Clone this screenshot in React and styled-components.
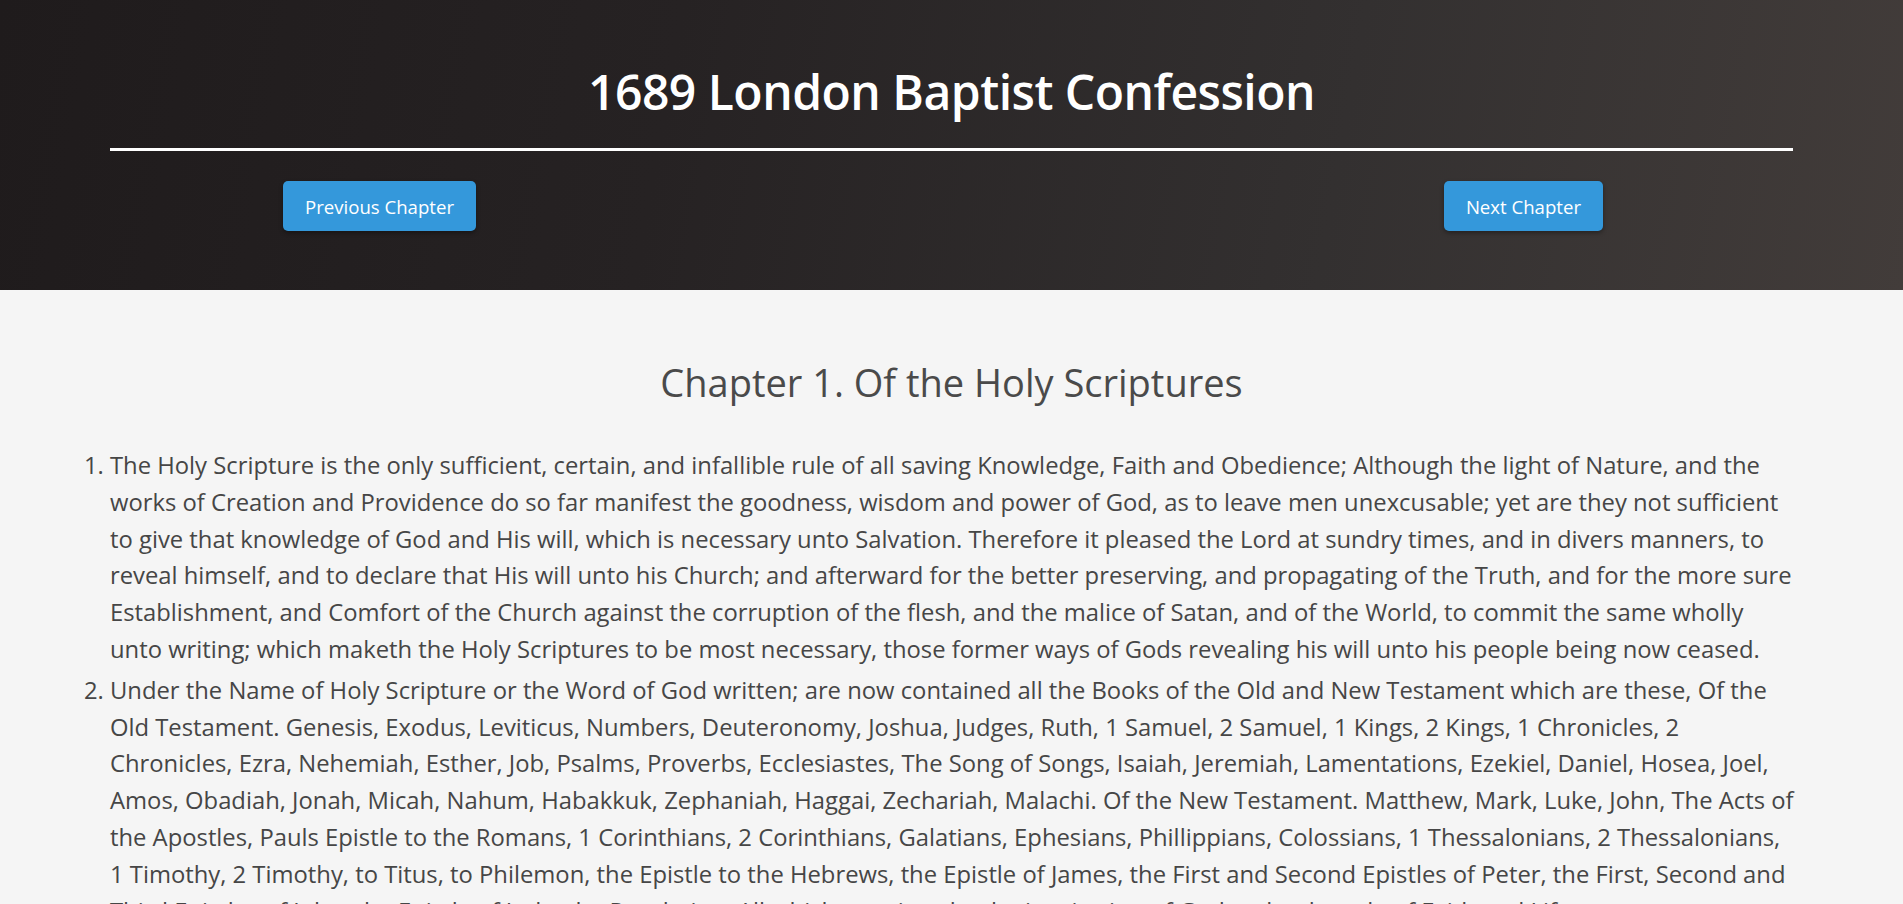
import React from 'react';
import styled, { createGlobalStyle } from 'styled-components';

const paragraphs = [
  'The Holy Scripture is the only sufficient, certain, and infallible rule of all saving Knowledge, Faith and Obedience; Although the light of Nature, and the works of Creation and Providence do so far manifest the goodness, wisdom and power of God, as to leave men unexcusable; yet are they not sufficient to give that knowledge of God and His will, which is necessary unto Salvation. Therefore it pleased the Lord at sundry times, and in divers manners, to reveal himself, and to declare that His will unto his Church; and afterward for the better preserving, and propagating of the Truth, and for the more sure Establishment, and Comfort of the Church against the corruption of the flesh, and the malice of Satan, and of the World, to commit the same wholly unto writing; which maketh the Holy Scriptures to be most necessary, those former ways of Gods revealing his will unto his people being now ceased.',
  'Under the Name of Holy Scripture or the Word of God written; are now contained all the Books of the Old and New Testament which are these, Of the Old Testament. Genesis, Exodus, Leviticus, Numbers, Deuteronomy, Joshua, Judges, Ruth, 1 Samuel, 2 Samuel, 1 Kings, 2 Kings, 1 Chronicles, 2 Chronicles, Ezra, Nehemiah, Esther, Job, Psalms, Proverbs, Ecclesiastes, The Song of Songs, Isaiah, Jeremiah, Lamentations, Ezekiel, Daniel, Hosea, Joel, Amos, Obadiah, Jonah, Micah, Nahum, Habakkuk, Zephaniah, Haggai, Zechariah, Malachi. Of the New Testament. Matthew, Mark, Luke, John, The Acts of the Apostles, Pauls Epistle to the Romans, 1 Corinthians, 2 Corinthians, Galatians, Ephesians, Phillippians, Colossians, 1 Thessalonians, 2 Thessalonians, 1 Timothy, 2 Timothy, to Titus, to Philemon, the Epistle to the Hebrews, the Epistle of James, the First and Second Epistles of Peter, the First, Second and Third Epistles of John, the Epistle of Jude, the Revelation. All which are given by the inspiration of God, to be the rule of Faith and Life.',
  'The Books commonly called Apocrypha not being of Divine inspiration, are no part of the Canon (or rule) of the Scripture, and therefore are of no authority to the Church of God, nor to be any otherwise approved or made use of, then other humane writings.',
  'The Authority of the Holy Scripture for which it ought to be believed dependeth not upon the testimony of any man, or Church; but wholly upon God (who is truth it self) the Author thereof; therefore it is to be received, because it is the Word of God.',
];

const GlobalStyle = createGlobalStyle`
  html, body {
    margin: 0;
    padding: 0;
    background: #f5f5f5;
  }
  body {
    font-family: 'Open Sans', 'Noto Sans', sans-serif;
  }
  ::-webkit-scrollbar {
    width: 4px;
  }
  ::-webkit-scrollbar-track {
    background: #f1f1f1;
  }
  ::-webkit-scrollbar-thumb {
    background: #c1c1c1;
  }
`;

const Header = styled.header`
  background: linear-gradient(100deg, #1f1b1c 0%, #262223 35%, #333030 70%, #423c3a 100%);
  padding: 68px 0 59px;
`;

const Inner = styled.div`
  width: calc(100% - 220px);
  margin: 0 auto;
`;

const Title = styled.h1`
  margin: 0;
  text-align: center;
  color: #fff;
  font-size: 48px;
  line-height: 48px;
  font-weight: 600;
  letter-spacing: -0.5px;
`;

const Rule = styled.hr`
  margin: 32px 0 30px;
  border: none;
  height: 3px;
  background: #fff;
`;

const NavRow = styled.nav`
  display: flex;
  justify-content: space-between;
  padding: 0 190px 0 173px;
`;

const NavButton = styled.button`
  height: 50px;
  padding: 0 22px;
  border: none;
  border-radius: 5px;
  background: #3498db;
  color: #fff;
  font-family: inherit;
  font-size: 18.6px;
  box-shadow: 0 2px 4px rgba(0, 0, 0, 0.35);
  cursor: pointer;
`;

const Main = styled.main`
  padding: 73px 0 40px;
  color: #464646;
`;

const ChapterTitle = styled.h2`
  margin: 0 0 46px;
  text-align: center;
  font-size: 38px;
  line-height: 38px;
  font-weight: 400;
  color: #4a4a4a;
`;

const List = styled.ol`
  margin: 0 -4.5px 0 0;
  padding: 0;
`;

const Item = styled.li`
  font-size: 23.8px;
  line-height: 36.8px;
  margin-bottom: 4px;
`;

const App = () => (
  <>
    <GlobalStyle />
    <Header>
      <Inner>
        <Title>1689 London Baptist Confession</Title>
        <Rule />
        <NavRow>
          <NavButton>Previous Chapter</NavButton>
          <NavButton>Next Chapter</NavButton>
        </NavRow>
      </Inner>
    </Header>
    <Main>
      <Inner>
        <ChapterTitle>Chapter 1. Of the Holy Scriptures</ChapterTitle>
        <List>
          {paragraphs.map((text, idx) => (
            <Item key={idx}>{text}</Item>
          ))}
        </List>
      </Inner>
    </Main>
  </>
);

export default App;
